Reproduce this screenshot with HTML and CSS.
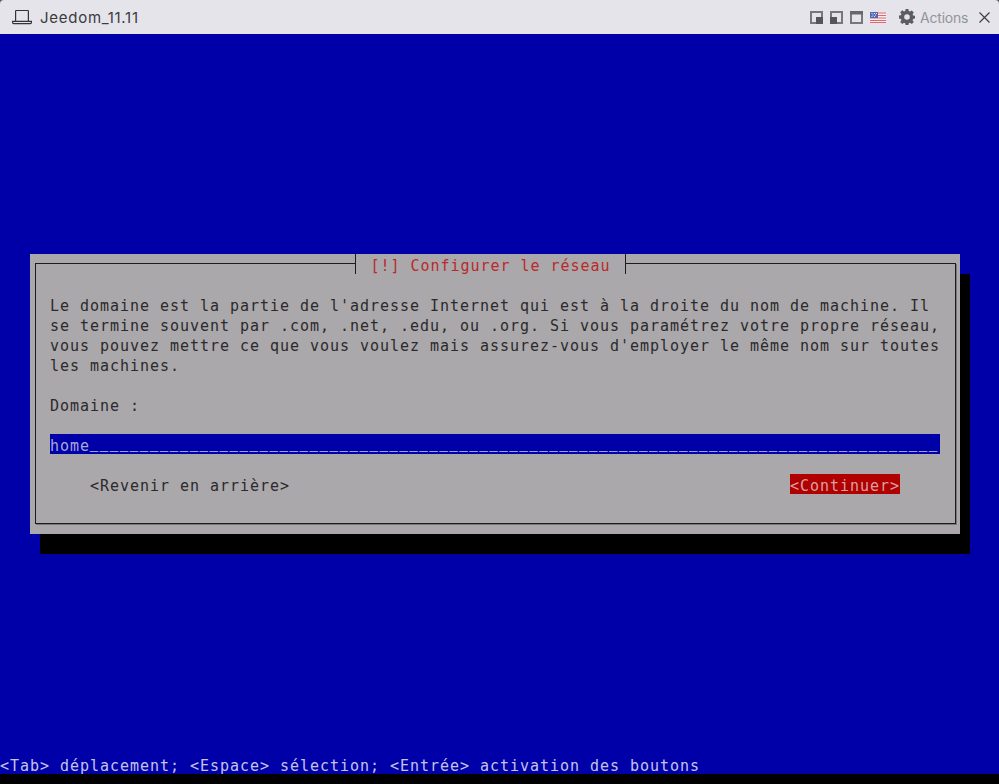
FILE: index.html
```html
<!DOCTYPE html>
<html lang="fr">
<head>
<meta charset="utf-8">
<title>Jeedom_11.11</title>
<link rel="stylesheet" href="styles.css">
</head>
<body>
<header class="titlebar">
  <svg class="vm-icon" width="20" height="16" viewBox="0 0 20 16" fill="none" stroke="#33343a" stroke-width="1.2"><path d="M3.6 12V2.1a.6.6 0 0 1 .6-.6h11.6a.6.6 0 0 1 .6.6V12"/><path d="M.6 12.4h18.8v1.2a1 1 0 0 1-1 1H1.6a1 1 0 0 1-1-1z"/></svg>
  <span class="vm-name">Jeedom_11.11</span>
  <div class="tools">
    <svg class="tool" width="13" height="13" viewBox="0 0 13 13"><rect x="1" y="1" width="11" height="11" fill="none" stroke="#77787d" stroke-width="2"/><rect x="6" y="6" width="7" height="7" fill="#55565a"/></svg>
    <svg class="tool" width="13" height="13" viewBox="0 0 13 13"><rect x="1" y="1" width="11" height="11" fill="none" stroke="#77787d" stroke-width="2"/><rect x="0" y="6" width="7" height="7" fill="#55565a"/></svg>
    <svg class="tool" width="13" height="13" viewBox="0 0 13 13"><rect x="1" y="1" width="11" height="11" fill="none" stroke="#77787d" stroke-width="2"/><rect x="0" y="0" width="13" height="3.500" fill="#66676b"/></svg>
    <svg class="flag" width="16" height="11" viewBox="0 0 16 11"><rect width="16" height="11" fill="#f4eef0"/><path d="M0 1h16M0 3.500h16M0 6h16M0 8.500h16M0 10.500h16" stroke="#e0676f" stroke-width="1"/><rect width="8" height="6" fill="#5468b4"/><path d="M1.500 1.500h1M4 1.500h1M6 1.500h1M2.500 3h1M5 3h1M1.500 4.500h1M4 4.500h1" stroke="#dfe3f2" stroke-width="1"/></svg>
    <svg class="gear" width="16" height="16" viewBox="0 0 16 16"><path fill="#5c5d63" fill-rule="evenodd" d="M6.600 0h2.800l.4 2.100 1.200.5L12.800 1.400l2 2-1.200 1.800.5 1.200 1.900.4v2.800l-1.900.4-.5 1.200 1.200 1.800-2 2-1.800-1.200-1.200.5-.4 1.900H6.600l-.4-1.900-1.200-.5-1.800 1.200-2-2 1.200-1.800-.5-1.200L0 9.400V6.600l1.900-.4.500-1.200L1.200 3.200l2-2L5 2.600l1.200-.5zM8 5.200a2.800 2.800 0 1 0 0 5.600 2.800 2.800 0 0 0 0-5.600z"/></svg>
    <span class="actions">Actions</span>
    <svg class="close" width="11" height="11" viewBox="0 0 11 11" fill="none" stroke="#3e3f44" stroke-width="1.200"><path d="M.5.500l10 10M10.500.500l-10 10"/></svg>
  </div>
</header>
<main class="console">
  <section class="dialog">
    <div class="frame">
      <h1 class="dialog-title">[!] Configurer le réseau</h1>
      <p class="message">Le domaine est la partie de l'adresse Internet qui est à la droite du nom de machine. Il
se termine souvent par .com, .net, .edu, ou .org. Si vous paramétrez votre propre réseau,
vous pouvez mettre ce que vous voulez mais assurez-vous d'employer le même nom sur toutes
les machines.</p>
      <p class="label">Domaine :</p>
      <div class="field">home<span class="blanks">_____________________________________________________________________________________</span></div>
      <div class="buttons">
        <span class="button">&lt;Revenir en arrière&gt;</span>
        <span class="button selected">&lt;Continuer&gt;</span>
      </div>
    </div>
  </section>
  <p class="hint">&lt;Tab&gt; déplacement; &lt;Espace&gt; sélection; &lt;Entrée&gt; activation des boutons</p>
</main>
<div class="bottom-strip"></div>
</body>
</html>
```
FILE: styles.css
```css
html, body {
  margin: 0;
  height: 100%;
}
body {
  display: flex;
  flex-direction: column;
  height: 784px;
  overflow: hidden;
  background: #55555a;
}
.titlebar {
  flex: 0 0 34px;
  display: flex;
  align-items: center;
  padding: 0 9px 0 12px;
  background: #e4e4ea;
  box-sizing: border-box;
  border-radius: 4px 4px 0 0;
  font-family: "Inter", "Noto Sans", sans-serif;
}
.vm-icon {
  margin-right: 8px;
}
.vm-name {
  font-size: 15px;
  color: #3a3b40;
  letter-spacing: .73px;
}
.tools {
  margin-left: auto;
  display: flex;
  align-items: center;
}
.tool {
  margin-right: 7px;
}
.flag {
  margin-right: 13px;
}
.gear {
  margin-right: 5px;
}
.actions {
  width: 48px;
  font-size: 14px;
  letter-spacing: -.2px;
  color: #939499;
  margin-right: 11px;
  white-space: nowrap;
}
.console {
  flex: 1;
  display: flex;
  flex-direction: column;
  padding-top: 220px;
  background: #0000a8;
  font-family: "DejaVu Sans Mono", monospace;
  font-size: 15px;
  letter-spacing: .97px;
  line-height: 20px;
}
.dialog {
  box-sizing: border-box;
  margin-left: 30px;
  width: 930px;
  height: 280px;
  padding: 9px 4px 10px 5px;
  background: #aaa8aa;
  box-shadow: 10px 20px 0 #000;
}
.frame {
  box-sizing: border-box;
  position: relative;
  height: 261px;
  padding: 30px 15px 0 14px;
  border: 1px solid #1c1c1e;
  box-shadow: 1px 1px 0 #77767a;
  color: #2a2a2c;
}
.dialog-title {
  position: absolute;
  top: -10px;
  left: 319px;
  width: 271px;
  height: 20px;
  margin: 0;
  box-sizing: border-box;
  border-left: 1px solid #1c1c1e;
  border-right: 1px solid #1c1c1e;
  background: #aaa8aa;
  color: #b92a2a;
  font: inherit;
  line-height: 24px;
  text-align: center;
}
.message {
  margin: 0;
  padding-top: 2px;
  white-space: pre;
}
.label {
  margin: 20px 0 18px;
}
.field {
  width: 890px;
  height: 20px;
  line-height: 24px;
  background: #0000a8;
  color: #a8a8d8;
  white-space: pre;
}
.blanks {
  font-size: 13.280px;
  letter-spacing: 2px;
  line-height: 0;
  vertical-align: 3px;
  color: #a0a0e8;
  -webkit-text-stroke: .4px #a0a0e8;
}
.buttons {
  display: flex;
  justify-content: space-between;
  margin-top: 20px;
  padding: 0 40px;
}
.button {
  display: block;
  height: 20px;
  line-height: 24px;
}
.selected {
  background: #b00000;
  color: #d8a0a0;
}
.hint {
  margin: auto 0 0;
  line-height: 16px;
  color: #c4c4ec;
  white-space: pre;
}
.bottom-strip {
  flex: 0 0 10px;
  background: #000;
}
```
